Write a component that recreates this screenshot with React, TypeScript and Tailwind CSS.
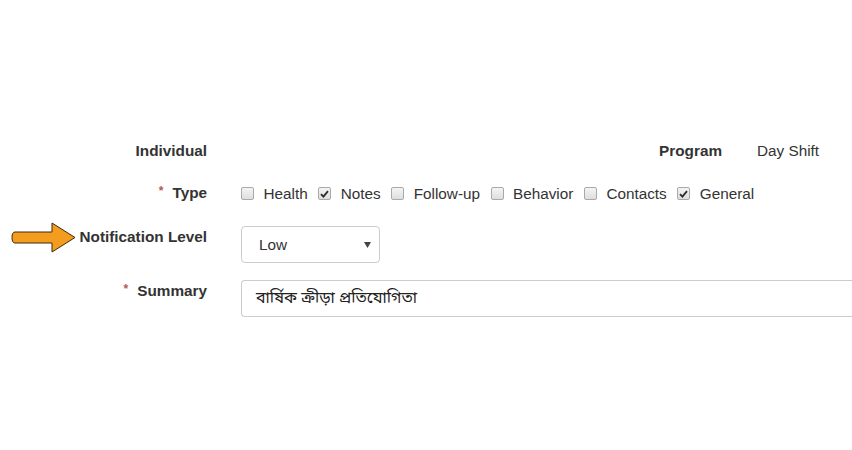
import React from "react";

const font = { fontFamily: '"Liberation Sans", Arial, sans-serif' };

const Check = ({ checked, label }: { checked?: boolean; label: string }) => (
  <label className="flex items-center mr-[10.5px]">
    <span className="relative w-[13px] h-[13px] rounded-[2px] border border-[#a9a9a9] bg-gradient-to-b from-[#f4f4f4] to-[#dedede] flex items-center justify-center">
      {checked && (
        <svg width="9" height="8" viewBox="0 0 9 8">
          <path d="M1 4.2 L3.4 6.6 L8 1.2" fill="none" stroke="#2b2b2b" strokeWidth="1.8" />
        </svg>
      )}
    </span>
    <span className="ml-[9.5px]">{label}</span>
  </label>
);

const Req = () => <span className="text-[#b45a5a] text-[12px] mr-[9px] relative -top-[3px]">*</span>;

export default function App() {
  return (
    <div className="w-[852px] h-[450px] bg-white text-[#333] text-[15.3px] leading-5 relative overflow-hidden" style={font}>
      <div className="pt-[141px]">
        {/* Individual / Program */}
        <div className="flex">
          <div className="w-[207px] text-right font-bold">Individual</div>
          <div className="w-[515px] text-right font-bold">Program</div>
          <div className="ml-[35px]">Day Shift</div>
        </div>

        {/* Type */}
        <div className="flex mt-[22px]">
          <div className="w-[207px] text-right font-bold">
            <Req />Type
          </div>
          <div className="ml-[34px] flex items-center">
            <Check label="Health" />
            <Check checked label="Notes" />
            <Check label="Follow-up" />
            <Check label="Behavior" />
            <Check label="Contacts" />
            <Check checked label="General" />
          </div>
        </div>

        {/* Notification Level */}
        <div className="flex mt-[22px] relative">
          <svg className="absolute left-[11px] -top-[4px]" width="66" height="32" viewBox="0 0 66 32">
            <path
              d="M4 10 L41 10 L41 1 L64 15.5 L41 30 L41 21 L4 21 Q1 21 1 15.5 Q1 10 4 10 Z"
              fill="#f39c1d"
              stroke="#3a2a10"
              strokeWidth="1"
              strokeLinejoin="miter"
            />
          </svg>
          <div className="w-[207px] text-right font-bold pt-[1px]">Notification Level</div>
          <div className="ml-[34px] w-[139px] h-[37px] border border-[#ccc] rounded-[4px] flex items-center justify-between pl-[17px] pr-[8px] bg-white">
            <span>Low</span>
            <svg width="7" height="6" viewBox="0 0 7 6">
              <path d="M0 0 L7 0 L3.5 6 Z" fill="#444" />
            </svg>
          </div>
        </div>

        {/* Summary */}
        <div className="flex mt-[17px]">
          <div className="w-[207px] text-right font-bold pt-[1px]">
            <Req />Summary
          </div>
          <div
            className="ml-[34px] flex-1 h-[37px] border border-[#ccc] border-r-0 rounded-l-[4px] flex items-center pl-[14px] text-[16px] text-[#222]"
            style={{ fontFamily: '"Noto Sans Bengali", "Noto Sans", "Liberation Sans", sans-serif' }}
          >
            বার্ষিক ক্রীড়া প্রতিযোগিতা
          </div>
        </div>
      </div>
    </div>
  );
}
